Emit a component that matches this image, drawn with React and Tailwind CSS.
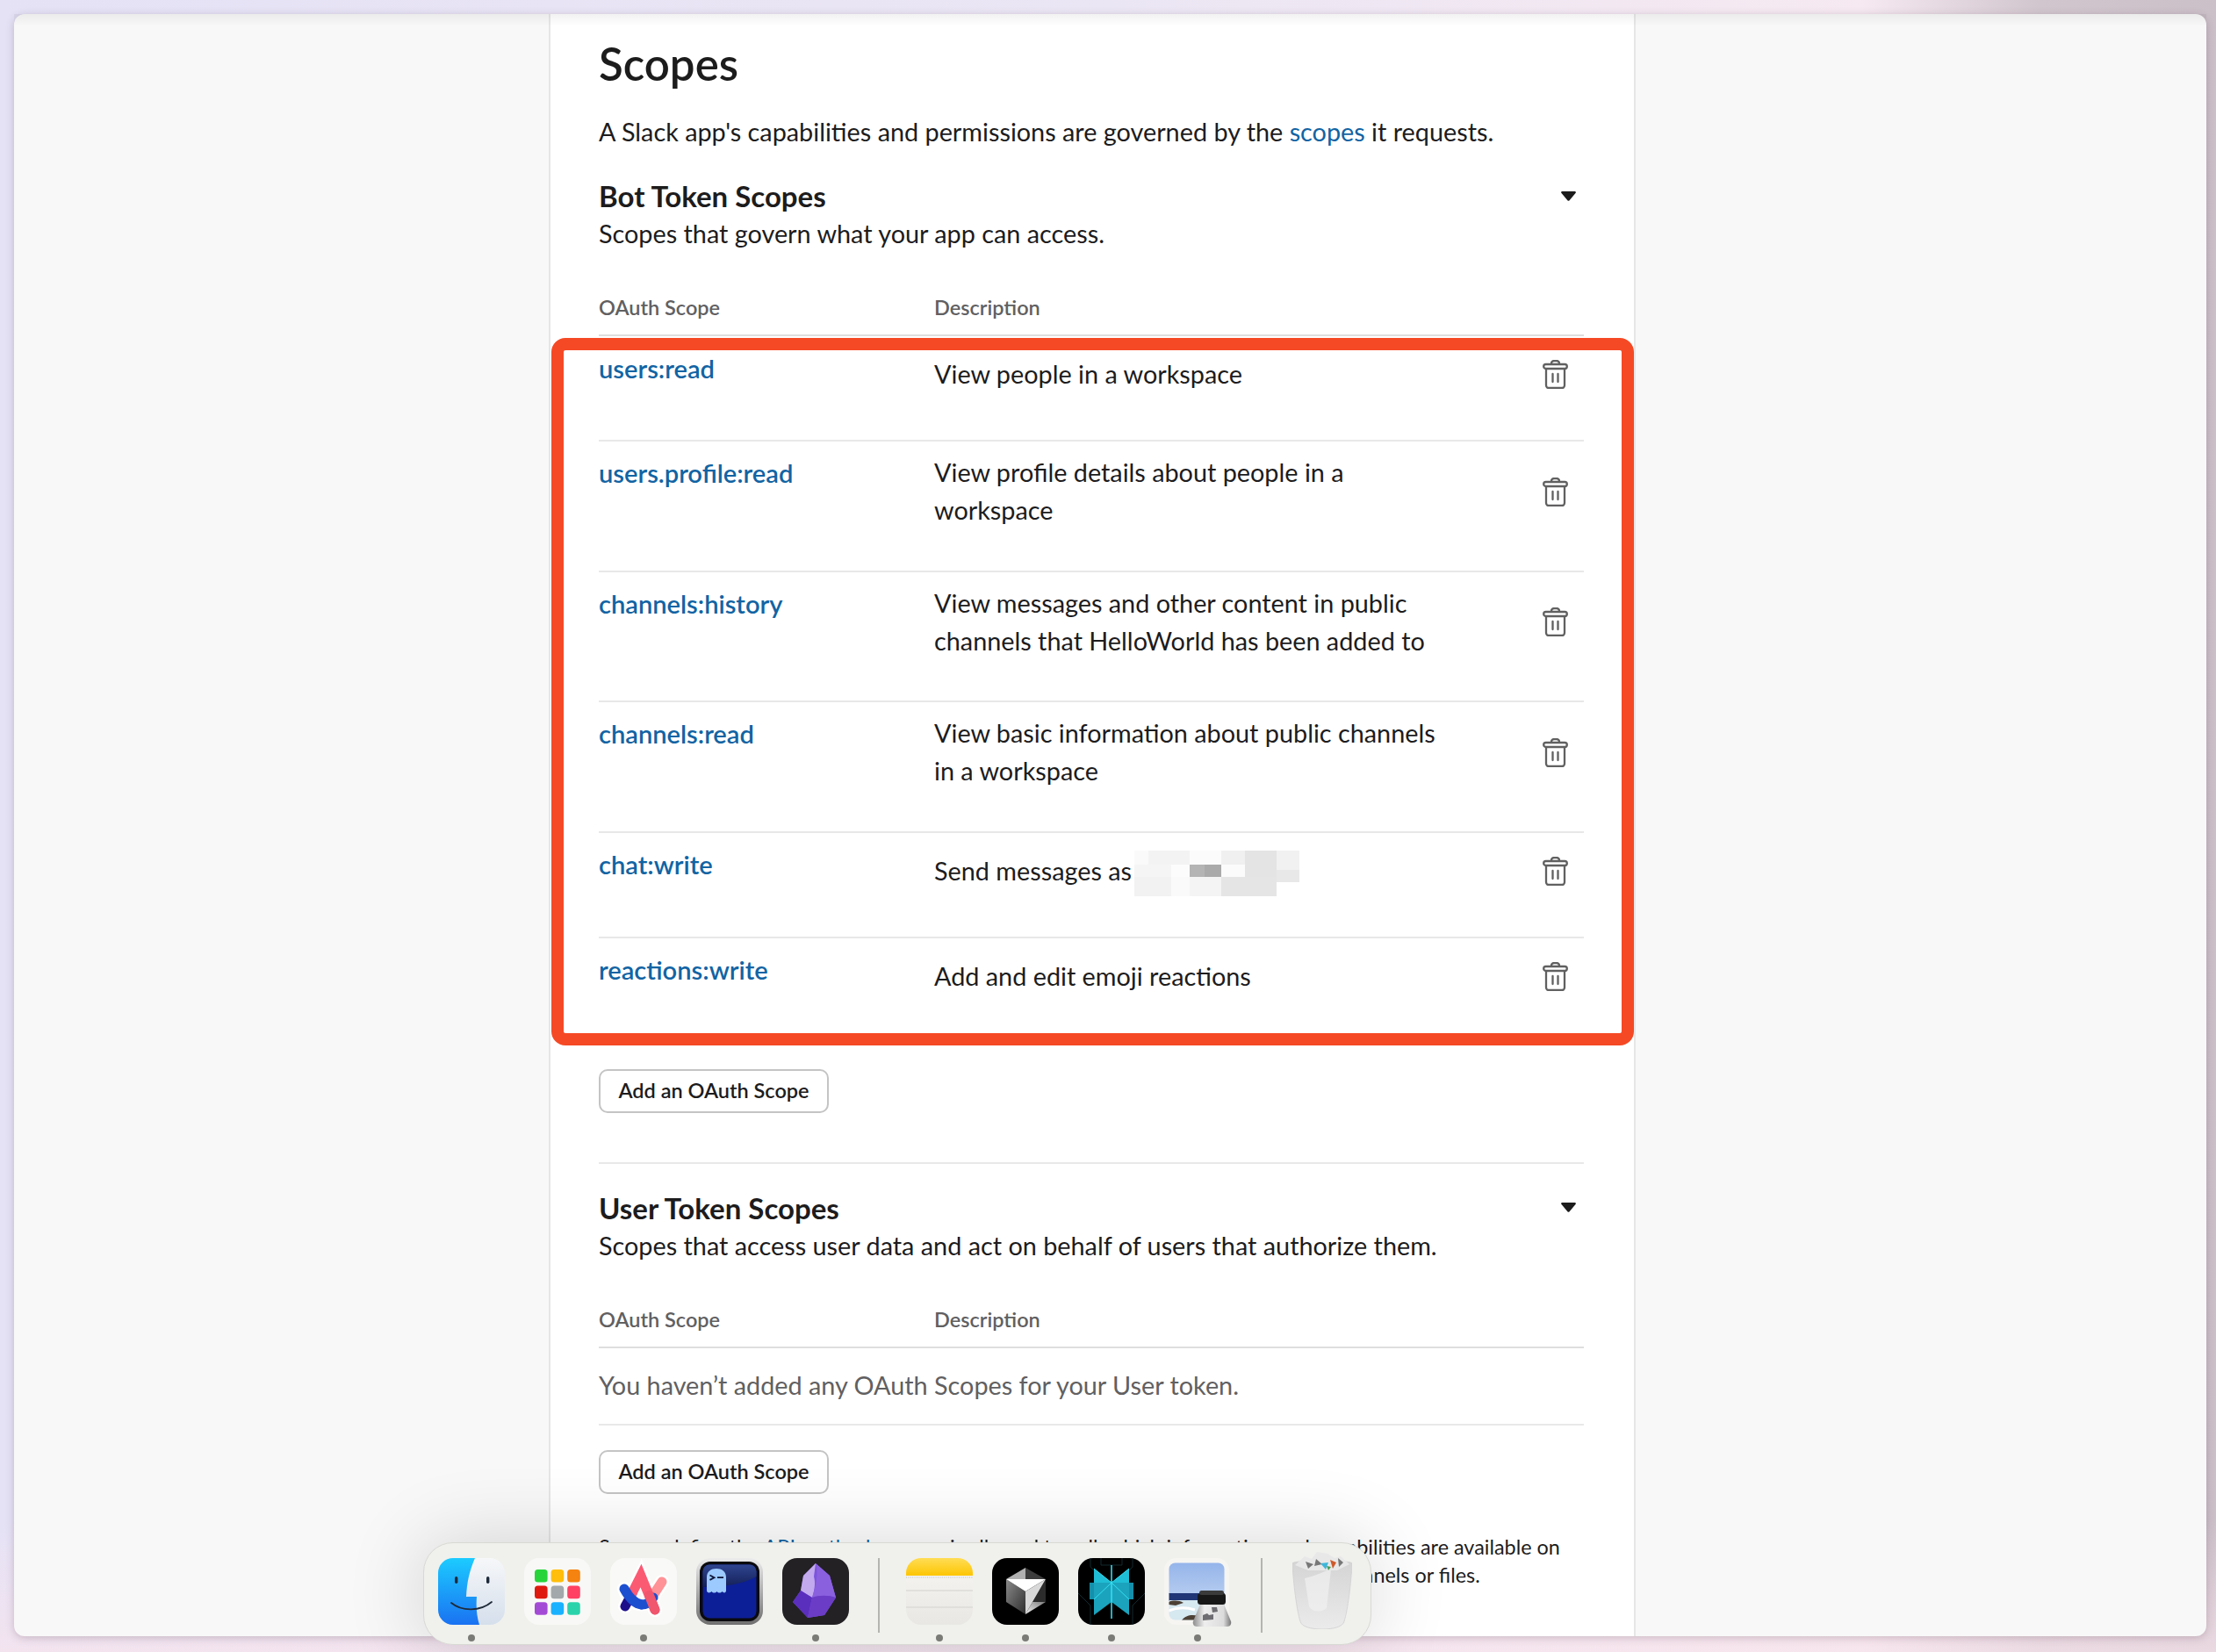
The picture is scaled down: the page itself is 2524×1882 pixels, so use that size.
const font = { fontFamily: 'Lato, "Noto Sans", sans-serif' }

function Trash() {
    return (
        <svg width="29" height="33" viewBox="0 0 29 33" fill="none" stroke="#616061" strokeWidth="2.3" strokeLinejoin="round">
            <path d="M10 5V4a3 3 0 0 1 3-3h3a3 3 0 0 1 3 3v1" />
            <rect x="1.2" y="5" width="26.6" height="5" rx="2.5" />
            <path d="M4 10v19a3 3 0 0 0 3 3h15a3 3 0 0 0 3-3V10" />
            <path d="M11.5 16v9M17.5 16v9" strokeLinecap="round" />
        </svg>
    )
}

function Caret() {
    return (
        <svg width="17" height="11" viewBox="0 0 17 11" className="mr-[9px]" fill="#1d1c1d">
            <path d="M1.5 0h14c1.2 0 1.8 1.2 1 2.1L9.4 10.4c-.5.6-1.3.6-1.8 0L.5 2.1C-.3 1.2.3 0 1.5 0z" />
        </svg>
    )
}

function Pixelated() {
    const cells = [
        [0, 0, 16, 16, '#fafafa'], [16, 0, 47, 16, '#f3f3f3'], [63, 0, 36, 16, '#fbfbfb'], [99, 0, 27, 16, '#f0f0f0'], [126, 0, 36, 16, '#e4e4e4'], [162, 0, 26, 22, '#f1f1f1'],
        [0, 16, 42, 14, '#f5f5f5'], [42, 16, 21, 14, '#fcfcfc'], [63, 16, 17, 14, '#b4b4b4'], [80, 16, 19, 14, '#aaaaaa'], [99, 16, 27, 14, '#fbfbfb'], [126, 16, 36, 14, '#e4e4e4'], [162, 22, 26, 14, '#e8e8e8'],
        [0, 30, 42, 22, '#f2f2f2'], [42, 30, 21, 22, '#fafafa'], [63, 30, 36, 22, '#f4f4f4'], [99, 30, 63, 22, '#e5e5e5'],
    ]
    return (
        <svg width="188" height="52" viewBox="0 0 188 52" className="ml-[3px] mt-[6px] shrink-0">
            {cells.map(([x, y, w, h, c], i) => <rect key={i} x={x} y={y} width={w} height={h} fill={c} />)}
        </svg>
    )
}

function ScopeRow({ scope, children, spacing, iconBox = 'h-[88px]' }) {
    return (
        <div className={`flex items-start ${spacing}`}>
            <a className="w-[382px] shrink-0 pt-[14px] text-[29.1px] leading-[43px] font-semibold text-[#1264a3]">{scope}</a>
            <div className="flex min-h-[88px] w-[590px] items-center pb-[16px] pt-[14px] text-[28.8px] leading-[43px] text-[#1d1c1d]">{children}</div>
            <div className={`-mt-px ml-auto mr-[18px] flex items-center ${iconBox}`}><Trash /></div>
        </div>
    )
}

function AddButton() {
    return (
        <button className="flex h-[50px] w-[262px] items-center justify-center rounded-[10px] border-2 border-[#c4c4c4] bg-white text-[23.5px] font-semibold text-[#1d1c1d]">
            Add an OAuth Scope
        </button>
    )
}

function TableHead() {
    return (
        <div className="flex border-b-2 border-[#dedede] pb-[15px] text-[23.5px] leading-[32px] font-semibold text-[#616061]">
            <span className="w-[382px]">OAuth Scope</span>
            <span>Description</span>
        </div>
    )
}

function FinderIcon() {
    return (
        <svg viewBox="0 0 76 76" className="size-full">
            <defs>
                <linearGradient id="fb" x1="0" y1="0" x2="0" y2="1"><stop offset="0" stopColor="#1ccbff" /><stop offset="1" stopColor="#1a72f2" /></linearGradient>
                <linearGradient id="fw" x1="0" y1="0" x2="0" y2="1"><stop offset="0" stopColor="#f6f7f9" /><stop offset="1" stopColor="#d5dfec" /></linearGradient>
                <clipPath id="fc"><rect width="76" height="76" rx="17" /></clipPath>
            </defs>
            <g clipPath="url(#fc)">
                <rect width="76" height="76" fill="url(#fw)" />
                <path d="M0 0h42C36 14 33 26 32 44h12c-1 12 0 22 3 32H0z" fill="url(#fb)" />
            </g>
            <rect x="19" y="21" width="3.4" height="8" rx="1.7" fill="#1d2a3a" />
            <rect x="55" y="21" width="3.4" height="8" rx="1.7" fill="#1d2a3a" />
            <path d="M15 51c12 10 33 10 46-1" fill="none" stroke="#1f2a38" strokeWidth="1.8" strokeLinecap="round" />
        </svg>
    )
}

function LaunchpadIcon() {
    const colors = ['#27d53a', '#ffbe0b', '#f5830f', '#e0190f', '#a3a8ab', '#ff4163', '#a44bd6', '#1ab2ff', '#2bd3ab']
    return (
        <svg viewBox="0 0 76 76" className="size-full">
            <rect width="76" height="76" rx="17" fill="#f8f8f6" />
            {colors.map((c, i) => (
                <rect key={c} x={12 + (i % 3) * 18.6} y={13 + Math.floor(i / 3) * 18.6} width="14.6" height="14.6" rx="3.5" fill={c} />
            ))}
        </svg>
    )
}

function ArcIcon() {
    return (
        <svg viewBox="0 0 76 76" className="size-full">
            <rect width="76" height="76" rx="17" fill="#f9f9f7" />
            <g fill="none" strokeLinecap="round" strokeWidth="11">
                <path d="M17 55L35 20l16 39M59 27L46 47M16 35c8 20 24 22 33 10" stroke="#fff" strokeWidth="16" />
                <path d="M17 55l8-15" stroke="#1d0f8a" />
                <path d="M59 27L46 47" stroke="#ff9296" />
                <path d="M25 40L35 20l16 39" stroke="#fb5a73" />
                <path d="M16 35c6 11 12 17 20 18" stroke="#1c4fd0" />
                <path d="M36 53c5 0 10-3 13-8" stroke="#1c4fd0" />
                <path d="M44.5 42.5L51 59" stroke="#f0566e" />
            </g>
        </svg>
    )
}

function GhostIcon() {
    return (
        <svg viewBox="0 0 76 76" className="size-full">
            <defs>
                <linearGradient id="gf" x1="0" y1="0" x2="0" y2="1"><stop offset="0" stopColor="#ececec" /><stop offset="1" stopColor="#6f6f6f" /></linearGradient>
                <linearGradient id="gt" x1="0" y1="0" x2="0" y2="1"><stop offset="0" stopColor="#2f4590" /><stop offset="1" stopColor="#142058" /></linearGradient>
            </defs>
            <rect width="76" height="76" rx="16" fill="url(#gf)" />
            <rect x="4" y="4" width="68" height="68" rx="12" fill="#0b0b0f" />
            <rect x="7.5" y="7.5" width="61" height="61" rx="8" fill="#0d1f96" />
            <path d="M7.5 33c22 0 46-3 61-12v-6a7.500 7.500 0 0 0-7.500-7.500H15A7.500 7.500 0 0 0 7.500 15z" fill="url(#gt)" />
            <path d="M12 22c0-7 5-10 11-10s11 3 11 10v15c0 3-3 3-4.500 1-1.500 2-4.500 2-6 0-1.500 2-4.500 2-6 0-1.500 2-5.500 2-5.500-1z" fill="#9ccaff" />
            <path d="M15.500 19.500l5 2.700-5 2.700M24 22.200h7" fill="none" stroke="#0f1436" strokeWidth="1.800" />
        </svg>
    )
}

function ObsidianIcon() {
    return (
        <svg viewBox="0 0 76 76" className="size-full">
            <rect width="76" height="76" rx="17" fill="#232124" />
            <path d="M38 6l16 14 7 25-13 20-19 3-17-18 9-13 3-17z" fill="#7c55dc" />
            <path d="M38 6L24 20l-3 17 13 8c3-9 4-17 2-24z" fill="#c3a9ee" />
            <path d="M38 6c3 7 2 20-4 39 8-3 20-2 27 0l-7-25z" fill="#8a60df" />
            <path d="M21 37L12 50l17 18 5-23z" fill="#5b2fbd" />
            <path d="M34 45l-5 23 19-3 13-20c-8-3-19-3-27 0z" fill="#6b3cc6" />
        </svg>
    )
}

function NotesIcon() {
    return (
        <svg viewBox="0 0 76 76" className="size-full">
            <defs>
                <linearGradient id="ny" x1="0" y1="0" x2="0" y2="1"><stop offset="0" stopColor="#ffdd55" /><stop offset="1" stopColor="#fdc502" /></linearGradient>
                <linearGradient id="np" x1="0" y1="0" x2="0" y2="1"><stop offset="0" stopColor="#f7f6f3" /><stop offset="1" stopColor="#e8e7e3" /></linearGradient>
                <clipPath id="nc"><rect width="76" height="76" rx="17" /></clipPath>
            </defs>
            <g clipPath="url(#nc)">
                <rect width="76" height="76" fill="url(#np)" />
                <rect width="76" height="20" fill="url(#ny)" />
                <path d="M0 22h76" stroke="#bbb" strokeWidth="1" strokeDasharray="1 1.400" />
                <path d="M0 37h76M0 56h76" stroke="#dcdbd7" strokeWidth="1.400" />
            </g>
        </svg>
    )
}

function CursorIcon() {
    return (
        <svg viewBox="0 0 76 76" className="size-full">
            <defs>
                <linearGradient id="cl" x1="0" y1="0" x2="1" y2="1"><stop offset="0" stopColor="#8a8a8a" /><stop offset="1" stopColor="#2e2e2e" /></linearGradient>
                <linearGradient id="cb" x1="0" y1="1" x2="1" y2="0"><stop offset="0" stopColor="#f4f4f4" /><stop offset="1" stopColor="#7c7c7c" /></linearGradient>
            </defs>
            <rect width="76" height="76" rx="17" fill="#000" />
            <path d="M38 11L16 24h22z" fill="#b0b0b0" />
            <path d="M38 11l23 13H38z" fill="#3c3c3c" />
            <path d="M16 24v26l22 14V38z" fill="url(#cl)" />
            <path d="M61 24v26H46z" fill="#2b2b2b" />
            <path d="M38 64l8-14h15z" fill="url(#cb)" />
            <path d="M16 24h45L38 38z" fill="#fff" />
            <path d="M61 24L46 50l-8 14V38z" fill="#d8d8d8" />
        </svg>
    )
}

function PerplexityIcon() {
    return (
        <svg viewBox="0 0 76 76" className="size-full">
            <rect width="76" height="76" rx="17" fill="#000" />
            <g fill="none" stroke="#16343a" strokeWidth=".8">
                <path d="M14 0v10l10 10M62 0v10L52 20M0 40l14 14v22M76 40L62 54v22M26 0v8h24V0" />
            </g>
            <path d="M13 28h25L18 47h-5zM63 28H38l20 19h5z" fill="#1590aa" />
            <path d="M18 28h20v22L18 65zM58 28H38v22l20 15z" fill="#1ba3bd" />
            <path d="M18 12l20 16H18zM58 12L38 28h20z" fill="#1fbdd6" />
            <path d="M37.200 8h1.600v61h-1.600z" fill="#2fdcf0" />
            <path d="M18 12l20 16 20-16M18 47l20-19 20 19" fill="none" stroke="#35dff2" strokeWidth="1" />
        </svg>
    )
}

function PreviewIcon() {
    return (
        <svg viewBox="0 0 76 76" className="size-full overflow-visible">
            <defs>
                <linearGradient id="ps" x1="0" y1="0" x2="0" y2="1"><stop offset="0" stopColor="#94b4ea" /><stop offset="1" stopColor="#b4cbef" /></linearGradient>
                <linearGradient id="pg" x1="0" y1="0" x2="1" y2="0"><stop offset="0" stopColor="#8d8d8d" /><stop offset=".3" stopColor="#eeeeee" /><stop offset=".8" stopColor="#dcdcdc" /><stop offset="1" stopColor="#777777" /></linearGradient>
                <clipPath id="pc"><rect x="5.500" y="5.500" width="63" height="65" rx="7" /></clipPath>
            </defs>
            <rect width="74" height="76" rx="14" fill="#f6f5f2" />
            <g clipPath="url(#pc)">
                <rect x="5" y="5" width="64" height="36" fill="url(#ps)" />
                <rect x="5" y="40" width="64" height="9" fill="#1f3576" />
                <rect x="5" y="48" width="64" height="24" fill="#d6e8f0" />
                <path d="M5 50c5-2 12-2 17 1l-9 3-8-1zM20 71c4-6 12-7 19-5v6z" fill="#4d4136" />
                <path d="M5 60c10-4 20-4 30-1" stroke="#ffffff" strokeWidth="3" fill="none" />
            </g>
            <path d="M42 50h25l9 22c1 3-1 6-4 6H37c-3 0-5-3-4-6z" fill="url(#pg)" />
            <rect x="38" y="40" width="32" height="13" rx="3.500" fill="#171717" />
            <rect x="40" y="37" width="28" height="5" rx="2.500" fill="#3b3b3b" />
            <path d="M44 65l5-2 2 2 5-1v6l-12 1zM54 56h6l1 5-6 1z" fill="#6d6d72" />
        </svg>
    )
}

function BinIcon() {
    return (
        <svg viewBox="0 0 68 88" className="size-full">
            <defs>
                <linearGradient id="tb" x1="0" y1="0" x2="0" y2="1"><stop offset="0" stopColor="#d4d4d4" /><stop offset="1" stopColor="#ebebeb" /></linearGradient>
            </defs>
            <path d="M0 13c0-4 68-4 68 0-1 22-5 54-9 66-1 6-12 9-25 9S10 85 9 79C5 67 1 35 0 13z" fill="url(#tb)" stroke="#cfcfcf" strokeWidth=".8" />
            <path d="M14 30c14-3 24-9 30-10l-5 44c-7 6-17 4-20-2z" fill="#f1f1f1" opacity=".7" />
            <path d="M3 15L14 5l8 3 6-8 12 2 8 5 7-2 10 9-14 7H18z" fill="#e8e8e8" />
            <path d="M15 11l9 3-6 5zM27 8l7 6-9 2zM52 7l6 5-5 5z" fill="#777" />
            <path d="M32 13l9-1-3 8z" fill="#3fb6d9" />
            <path d="M43 9l7 3-4 7z" fill="#cf5a2a" />
            <path d="M39 16l5 1-3 4z" fill="#4c9c53" />
        </svg>
    )
}

function DockItem({ children, dot }) {
    return (
        <div className="relative size-[76px] shrink-0">
            {children}
            {dot && <span className="absolute left-1/2 top-[87px] size-2 -translate-x-1/2 rounded-full bg-[#7a7a76]" />}
        </div>
    )
}

function Dock() {
    return (
        <div className="absolute left-[482px] top-[1757px] flex h-[117px] w-[1080px] items-start gap-[22px] rounded-[34px] border border-[#d8d8d4] bg-[#f0f1ed] pl-[16px] pt-[17px] shadow-[0_0_90px_rgba(0,0,0,0.16)]">
            <DockItem dot><FinderIcon /></DockItem>
            <DockItem><LaunchpadIcon /></DockItem>
            <DockItem dot><ArcIcon /></DockItem>
            <DockItem><GhostIcon /></DockItem>
            <DockItem dot><ObsidianIcon /></DockItem>
            <div className="ml-[11px] mr-[8px] h-[85px] w-[2px] shrink-0 bg-[#b4b5b1]" />
            <DockItem dot><NotesIcon /></DockItem>
            <DockItem dot><CursorIcon /></DockItem>
            <DockItem dot><PerplexityIcon /></DockItem>
            <DockItem dot><PreviewIcon /></DockItem>
            <div className="mx-[12px] h-[85px] w-[2px] shrink-0 bg-[#b4b5b1]" />
            <div className="h-[88px] w-[68px] shrink-0 -translate-y-[7px]"><BinIcon /></div>
        </div>
    )
}

export default function App() {
    return (
        <div className="relative h-[1882px] w-[2524px] overflow-hidden bg-[linear-gradient(to_bottom,transparent_92%,rgba(248,228,236,0.7)),linear-gradient(to_right,#e5e2f6_0%,#ebe6f4_50%,#f6e9f1_84%,#d2c6ce_92%,#cbbfc8_100%)] pl-4 pt-4" style={font}>
            <div className="flex h-[1848px] w-[2497px] overflow-hidden rounded-xl bg-[#f8f8f8] shadow-[0_2px_10px_rgba(80,50,70,0.25)]">
                <div className="w-[609px] shrink-0" />
                <main className="h-full w-[1238px] shrink-0 overflow-hidden border-x-2 border-[#e6e6e6] bg-white pl-[55px] pr-[57px] pt-[25px] text-[#1d1c1d]">
                    <h1 className="text-[51px] leading-[64px] font-semibold">Scopes</h1>
                    <p className="mt-[24px] text-[28.8px] leading-[43px]">
                        A Slack app's capabilities and permissions are governed by the <a className="text-[#1264a3]">scopes</a> it requests.
                    </p>

                    <div className="mt-[29px] flex items-center justify-between">
                        <h2 className="text-[33px] leading-[44px] font-bold">Bot Token Scopes</h2>
                        <Caret />
                    </div>
                    <p className="text-[28.8px] leading-[43px]">Scopes that govern what your app can access.</p>

                    <div className="mt-[46px]"><TableHead /></div>

                    <div className="relative z-10 -ml-[54px] -mr-[57px] mt-[2px] rounded-[16px] border-[14px] border-[#f54925] pl-[40px] pr-[43px]">
                        <ScopeRow scope="users:read" spacing="-mt-[15.5px] border-b-2 border-[#e8e8e8] pb-[29.5px]">View people in a workspace</ScopeRow>
                        <ScopeRow scope="users.profile:read" iconBox="h-[116px]" spacing="border-b-2 border-[#e8e8e8] pb-[30.7px]">View profile details about people in a workspace</ScopeRow>
                        <ScopeRow scope="channels:history" iconBox="h-[116px]" spacing="border-b-2 border-[#e8e8e8] pb-[30.7px]">View messages and other content in public channels that HelloWorld has been added to</ScopeRow>
                        <ScopeRow scope="channels:read" iconBox="h-[116px]" spacing="border-b-2 border-[#e8e8e8] pb-[30.7px]">View basic information about public channels in a workspace</ScopeRow>
                        <ScopeRow scope="chat:write" spacing="border-b-2 border-[#e8e8e8] pb-[30px]">Send messages as <Pixelated /></ScopeRow>
                        <ScopeRow scope="reactions:write" spacing="pb-[20px]">Add and edit emoji reactions</ScopeRow>
                    </div>

                    <div className="mt-[26.5px]"><AddButton /></div>

                    <div className="mt-[56px] border-t-2 border-[#e8e8e8] pt-[28px]">
                        <div className="flex items-center justify-between">
                            <h2 className="text-[33px] leading-[44px] font-bold">User Token Scopes</h2>
                            <Caret />
                        </div>
                        <p className="text-[28.8px] leading-[43px]">Scopes that access user data and act on behalf of users that authorize them.</p>
                    </div>

                    <div className="mt-[46.5px]"><TableHead /></div>
                    <div className="flex h-[88px] items-center border-b-2 border-[#e8e8e8] text-[28.8px] text-[#616061]">
                        You haven’t added any OAuth Scopes for your User token.
                    </div>

                    <div className="mt-[28px]"><AddButton /></div>

                    <p className="mt-[44px] w-[1105px] text-[23.4px] leading-[32px]">
                        Scopes define the <a className="text-[#1264a3]">API methods</a> an app is allowed to call, which information and capabilities are available on a workspace it's installed on. Many scopes are restricted to specific resources like channels or files.
                    </p>
                </main>
                <div className="flex-1" />
            </div>
            <div className="pointer-events-none absolute left-4 top-4 h-[14px] w-[2497px] bg-[linear-gradient(to_bottom,rgba(0,0,0,0.05),transparent)]" />
            <Dock />
        </div>
    )
}
